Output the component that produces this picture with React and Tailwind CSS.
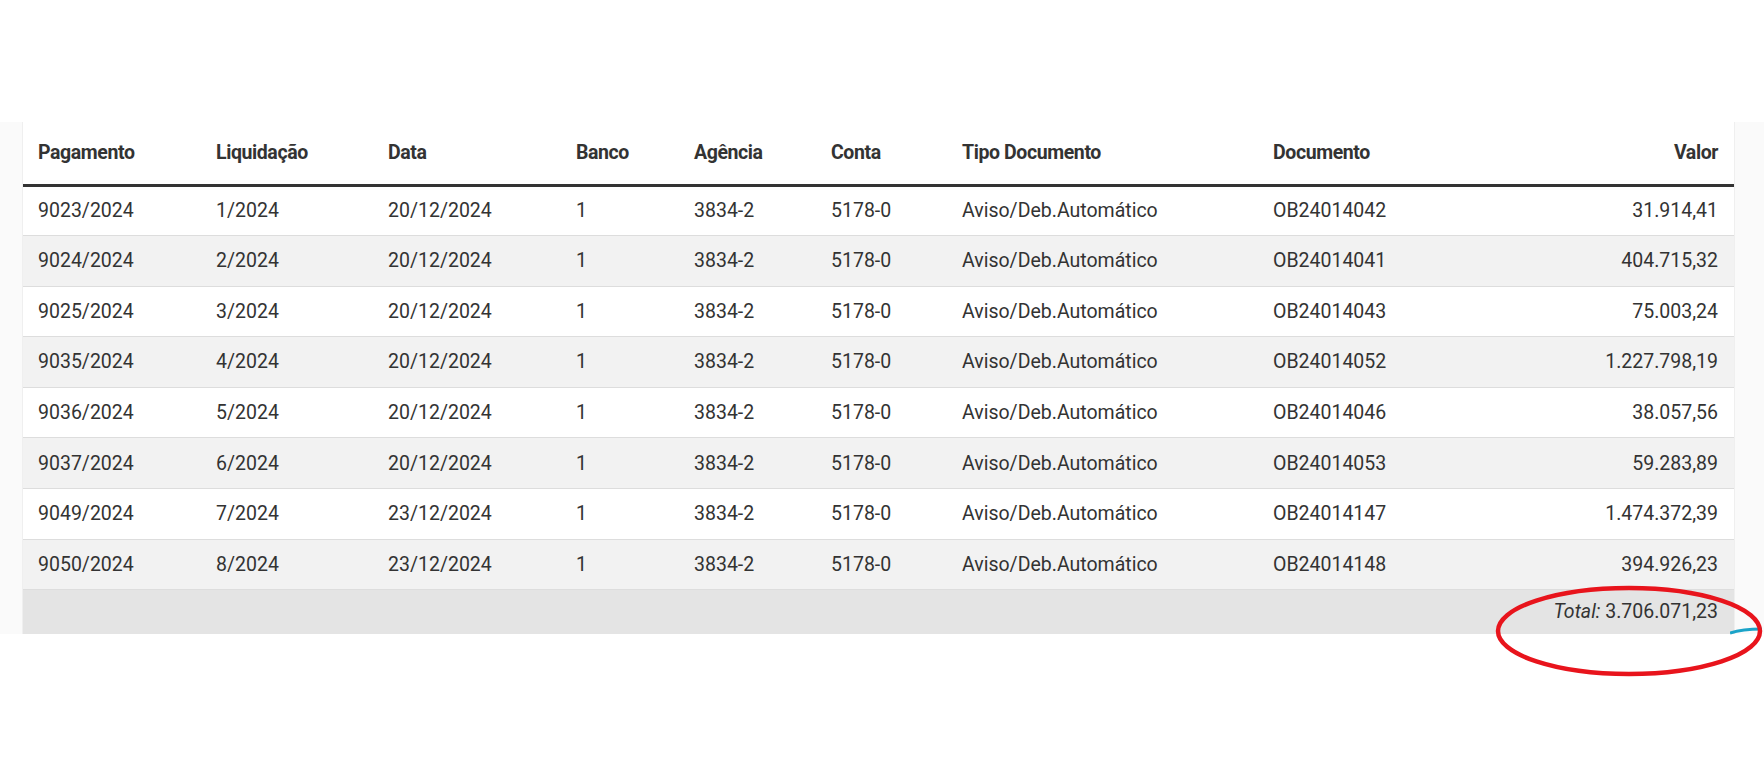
import React from "react";

const rows = [
  ["9023/2024", "1/2024", "20/12/2024", "1", "3834-2", "5178-0", "Aviso/Deb.Automático", "OB24014042", "31.914,41"],
  ["9024/2024", "2/2024", "20/12/2024", "1", "3834-2", "5178-0", "Aviso/Deb.Automático", "OB24014041", "404.715,32"],
  ["9025/2024", "3/2024", "20/12/2024", "1", "3834-2", "5178-0", "Aviso/Deb.Automático", "OB24014043", "75.003,24"],
  ["9035/2024", "4/2024", "20/12/2024", "1", "3834-2", "5178-0", "Aviso/Deb.Automático", "OB24014052", "1.227.798,19"],
  ["9036/2024", "5/2024", "20/12/2024", "1", "3834-2", "5178-0", "Aviso/Deb.Automático", "OB24014046", "38.057,56"],
  ["9037/2024", "6/2024", "20/12/2024", "1", "3834-2", "5178-0", "Aviso/Deb.Automático", "OB24014053", "59.283,89"],
  ["9049/2024", "7/2024", "23/12/2024", "1", "3834-2", "5178-0", "Aviso/Deb.Automático", "OB24014147", "1.474.372,39"],
  ["9050/2024", "8/2024", "23/12/2024", "1", "3834-2", "5178-0", "Aviso/Deb.Automático", "OB24014148", "394.926,23"],
];

const headers = ["Pagamento", "Liquidação", "Data", "Banco", "Agência", "Conta", "Tipo Documento", "Documento", "Valor"];
const widths = [178, 172, 188, 118, 137, 131, 311, 200, 276];

export default function App() {
  return (
    <div
      className="relative w-full h-[773px] bg-white pt-[122px] text-[#333]"
      style={{ fontFamily: "Roboto, 'Liberation Sans', sans-serif" }}
    >
      <div className="flex">
        {/* lateral esquerda */}
        <div className="w-[23px] bg-[#fafafa] border-r border-[#efefef]" />

        <table className="table-fixed border-collapse w-[1711px]">
          <colgroup>
            {widths.map((w, i) => (
              <col key={i} style={{ width: w }} />
            ))}
          </colgroup>
          <thead>
            <tr className="h-[63px] border-b-[3px] border-[#333]">
              {headers.map((h, i) => (
                <th
                  key={h}
                  className={`px-[15px] text-[19.5px] font-bold tracking-[-0.4px] ${
                    i === headers.length - 1 ? "text-right pr-[16px]" : "text-left"
                  }`}
                >
                  {h}
                </th>
              ))}
            </tr>
          </thead>
          <tbody>
            {rows.map((r, ri) => (
              <tr
                key={ri}
                className={`h-[50.6px] border-b border-[#dddddd] ${ri % 2 === 1 ? "bg-[#f2f2f2]" : "bg-white"}`}
              >
                {r.map((c, ci) => (
                  <td
                    key={ci}
                    className={`px-[15px] text-[19.5px] ${ci === r.length - 1 ? "text-right pr-[16px]" : "text-left"}`}
                  >
                    {c}
                  </td>
                ))}
              </tr>
            ))}
            <tr className="h-[44px] bg-[#e4e4e4]">
              <td colSpan={9} className="text-right pr-[16px] text-[19.5px]">
                <em>Total:</em> 3.706.071,23
              </td>
            </tr>
          </tbody>
        </table>

        {/* lateral direita */}
        <div className="flex-1 bg-[#fafafa] border-l border-[#efefef]" />
      </div>

      {/* marca azul do botão flutuante */}
      <svg className="absolute left-[1730px] top-[627px]" width="34" height="8" viewBox="0 0 34 8">
        <path d="M0 6 Q 12 2 32 2" stroke="#1aa3c8" strokeWidth="3" fill="none" />
      </svg>

      {/* anotação em vermelho */}
      <svg className="absolute left-[1494px] top-[584px] pointer-events-none" width="270" height="94" viewBox="0 0 270 94">
        <ellipse cx="135" cy="47" rx="131" ry="43" stroke="#e8141c" strokeWidth="4.5" fill="none" />
      </svg>
    </div>
  );
}
